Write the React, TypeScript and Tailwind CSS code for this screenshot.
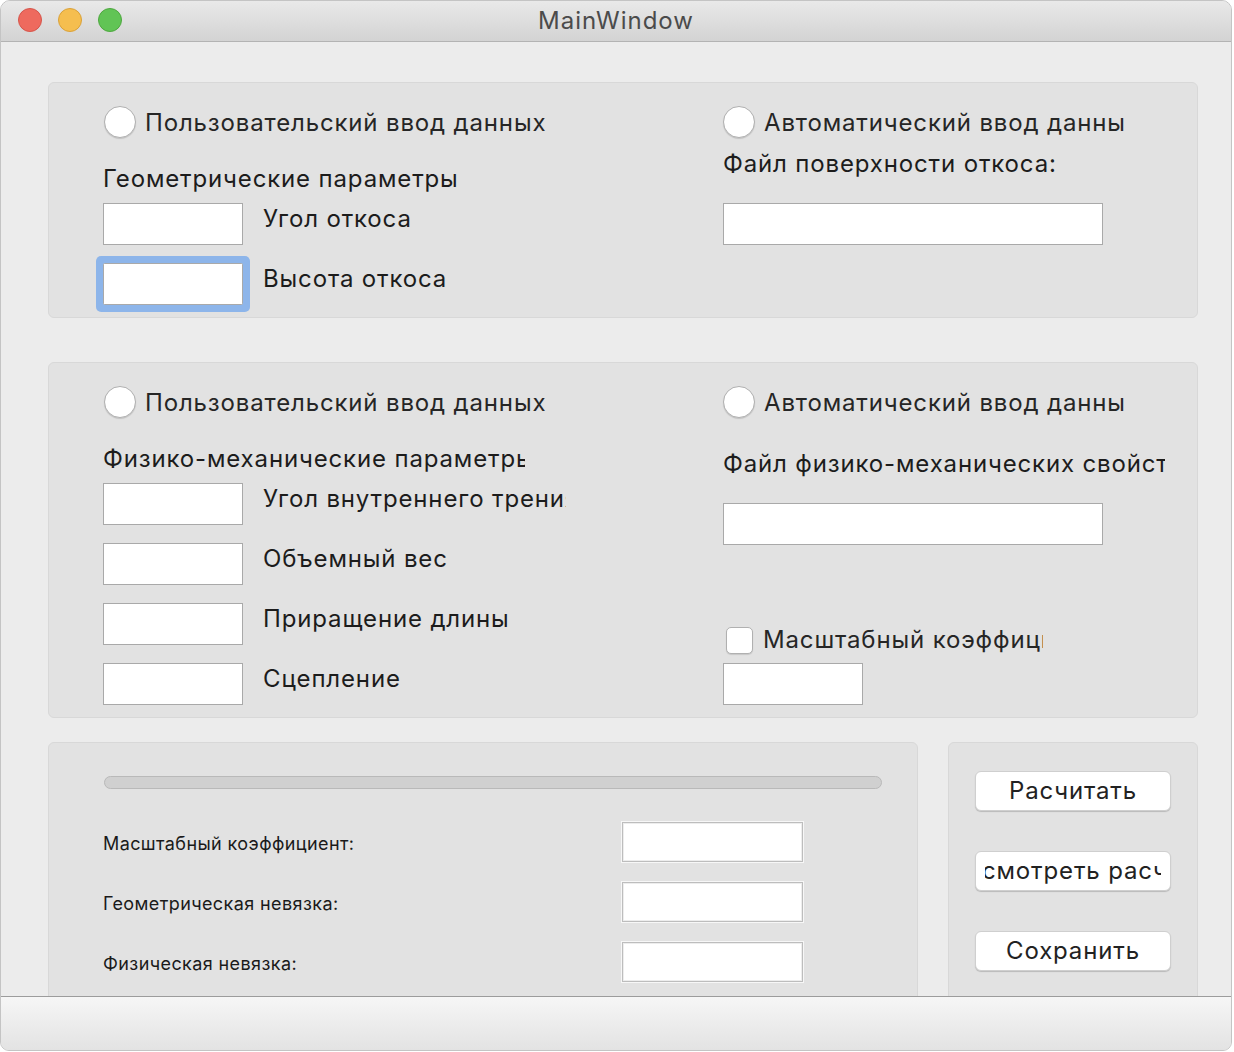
import React from "react";

const font = "font-['Inter','Liberation_Sans',sans-serif]";

function Radio({ label, clip }: { label: string; clip: string }) {
  return (
    <div className="flex items-center h-[32px]">
      <span className="w-[32px] h-[32px] shrink-0 rounded-full bg-white border border-[#b0b0b0] shadow-[0_1px_1px_rgba(0,0,0,0.14)]" />
      <span
        className={`ml-[9px] mt-[2px] overflow-hidden whitespace-nowrap text-[24px] leading-[32px] tracking-[0.85px] text-[#262626] ${clip}`}
      >
        {label}
      </span>
    </div>
  );
}

function Field({
  label,
  focused,
  clip,
  className = "",
}: {
  label: string;
  focused?: boolean;
  clip?: string;
  className?: string;
}) {
  return (
    <div className={`flex ${className}`}>
      <div
        className={`w-[140px] h-[42px] shrink-0 bg-white border border-[#a9a9a9] ${
          focused ? "rounded-[1.5px] shadow-[0_0_0_7px_#8db5ea]" : ""
        }`}
      />
      <span
        className={`ml-[20px] mt-[2px] overflow-hidden whitespace-nowrap text-[24px] leading-[28px] tracking-[0.85px] text-[#1c1c1c] ${
          clip ?? ""
        }`}
      >
        {label}
      </span>
    </div>
  );
}

function Panel({
  className = "",
  children,
}: {
  className?: string;
  children: React.ReactNode;
}) {
  return (
    <div
      className={`rounded-[6px] border border-[#d8d8d8] bg-[#e2e2e2] ${className}`}
    >
      {children}
    </div>
  );
}

function ResultRow({ label }: { label: string }) {
  return (
    <div className="flex items-center h-[40px]">
      <span className="w-[519px] pt-[2px] text-[18px] tracking-[0.4px] text-[#1a1a1a]">
        {label}
      </span>
      <div className="w-[181px] h-[40px] bg-white border border-[#bdbdbd] shadow-[0_0_0_1px_#f7f7f7,inset_0_0_0_1px_#ededed]" />
    </div>
  );
}

function Button({ label }: { label: string }) {
  return (
    <div className="w-[196px] h-[40px] rounded-[6px] bg-white border border-[#cfcfcf] shadow-[0_1px_1px_rgba(0,0,0,0.18)] px-[9px] flex">
      <div className="flex-1 overflow-hidden flex justify-center items-center">
        <span className="whitespace-nowrap text-[24px] leading-[28px] tracking-[0.85px] text-[#222222]">
          {label}
        </span>
      </div>
    </div>
  );
}

export default function App() {
  return (
    <div className={`w-[1234px] h-[1052px] bg-white ${font}`}>
      <div className="w-[1232px] h-[1051px] flex flex-col bg-[#ececec] border border-[#c4c4c4] rounded-t-[10px] rounded-b-[9px] overflow-hidden">
        {/* Title bar */}
        <div className="relative h-[41px] shrink-0 border-b border-[#b3b3b3] bg-gradient-to-b from-[#e9e9e9] to-[#d3d3d3] flex items-center justify-center">
          <div className="absolute left-[17px] top-[7px] flex gap-[16px]">
            <span className="w-[24px] h-[24px] rounded-full bg-[#ee6a5e] border border-[#d5554b]" />
            <span className="w-[24px] h-[24px] rounded-full bg-[#f5be4f] border border-[#d9a13a]" />
            <span className="w-[24px] h-[24px] rounded-full bg-[#61c455] border border-[#4ea73f]" />
          </div>
          <span className="text-[24px] leading-[28px] tracking-[1px] text-[#4b4b4b]">
            MainWindow
          </span>
        </div>

        {/* Content */}
        <div className="flex-1 min-h-0 overflow-hidden pl-[47px] pt-[40px] flex flex-col">
          {/* Geometry */}
          <Panel className="w-[1150px] h-[236px] shrink-0 flex pt-[23px]">
            <div className="w-[674px] pl-[54px] flex flex-col">
              <div className="ml-[1px]">
                <Radio label="Пользовательский ввод данных" clip="w-[420px]" />
              </div>
              <div className="mt-[27px] text-[24px] leading-[28px] tracking-[0.85px] text-[#1c1c1c]">
                Геометрические параметры
              </div>
              <Field label="Угол откоса" className="mt-[10px]" />
              <Field label="Высота откоса" focused className="mt-[18px]" />
            </div>
            <div className="flex flex-col">
              <Radio label="Автоматический ввод данных" clip="w-[360px]" />
              <div className="mt-[12px] text-[24px] leading-[28px] tracking-[0.85px] text-[#1c1c1c]">
                Файл поверхности откоса:
              </div>
              <div className="mt-[25px] w-[380px] h-[42px] bg-white border border-[#a9a9a9]" />
            </div>
          </Panel>

          {/* Physical-mechanical */}
          <Panel className="w-[1150px] h-[356px] shrink-0 mt-[44px] flex pt-[23px]">
            <div className="w-[674px] pl-[54px] flex flex-col">
              <div className="ml-[1px]">
                <Radio label="Пользовательский ввод данных" clip="w-[420px]" />
              </div>
              <div className="mt-[27px] w-[422px] overflow-hidden whitespace-nowrap text-[24px] leading-[28px] tracking-[0.85px] text-[#1c1c1c]">
                Физико-механические параметры
              </div>
              <Field
                label="Угол внутреннего трения"
                clip="w-[303px]"
                className="mt-[10px]"
              />
              <Field label="Объемный вес" className="mt-[18px]" />
              <Field label="Приращение длины" className="mt-[18px]" />
              <Field label="Сцепление" className="mt-[18px]" />
            </div>
            <div className="flex flex-col">
              <Radio label="Автоматический ввод данных" clip="w-[360px]" />
              <div className="mt-[32px] w-[442px] overflow-hidden whitespace-nowrap text-[24px] leading-[28px] tracking-[0.85px] text-[#1c1c1c]">
                Файл физико-механических свойств
              </div>
              <div className="mt-[25px] w-[380px] h-[42px] bg-white border border-[#a9a9a9]" />
              <div className="mt-[81px] h-[28px] flex items-center">
                <span className="ml-[3px] w-[27px] h-[27px] shrink-0 rounded-[5px] bg-white border border-[#b0b0b0] shadow-[0_1px_1px_rgba(0,0,0,0.12)]" />
                <span className="ml-[10px] w-[280px] overflow-hidden whitespace-nowrap text-[24px] leading-[28px] tracking-[0.85px] text-[#262626]">
                  Масштабный коэффициент
                </span>
              </div>
              <div className="mt-[9px] w-[140px] h-[42px] bg-white border border-[#a9a9a9]" />
            </div>
          </Panel>

          {/* Results + actions */}
          <div className="mt-[24px] flex gap-[30px] shrink-0">
            <Panel className="w-[870px] h-[290px] flex flex-col">
              <div className="ml-[55px] mt-[33px] w-[778px] h-[13px] rounded-full bg-[#d0d0d0] border border-[#b9b9b9]" />
              <div className="mt-[33px] pl-[54px] flex flex-col gap-[20px]">
                <ResultRow label="Масштабный коэффициент:" />
                <ResultRow label="Геометрическая невязка:" />
                <ResultRow label="Физическая невязка:" />
              </div>
            </Panel>
            <Panel className="w-[250px] h-[290px] pl-[26px] pt-[28px] flex flex-col gap-[40px]">
              <Button label="Расчитать" />
              <Button label="Просмотреть расчеты" />
              <Button label="Сохранить" />
            </Panel>
          </div>
        </div>

        {/* Status bar */}
        <div className="h-[54px] shrink-0 border-t border-[#9c9c9c] bg-gradient-to-b from-[#f6f6f6] to-[#e3e3e3]" />
      </div>
    </div>
  );
}
